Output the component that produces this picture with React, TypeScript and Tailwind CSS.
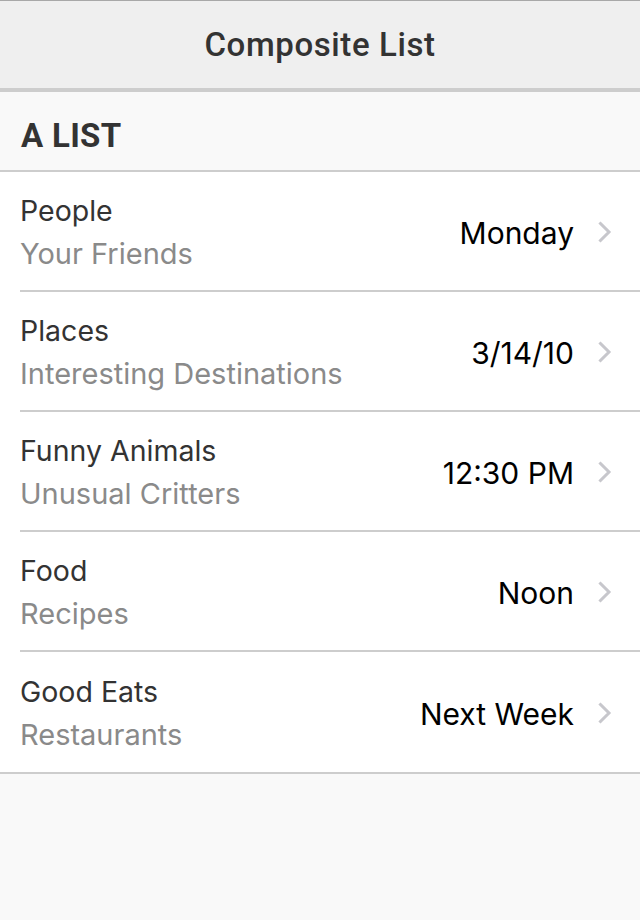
import React from "react";

const rows = [
  { title: "People", sub: "Your Friends", value: "Monday" },
  { title: "Places", sub: "Interesting Destinations", value: "3/14/10" },
  { title: "Funny Animals", sub: "Unusual Critters", value: "12:30 PM" },
  { title: "Food", sub: "Recipes", value: "Noon" },
  { title: "Good Eats", sub: "Restaurants", value: "Next Week" },
];

function Chevron() {
  return (
    <svg width="14" height="22" viewBox="0 0 14 22" className="shrink-0 mt-[2px]">
      <path d="M2.5 2.5 L11 11 L2.5 19.5" fill="none" stroke="#c7c7cc" strokeWidth="3" strokeLinecap="square" />
    </svg>
  );
}

export default function App() {
  return (
    <div
      className="w-[640px] h-[920px] bg-[#f9f9f9] flex flex-col"
      style={{ fontFamily: "Inter, Roboto, 'Liberation Sans', sans-serif" }}
    >
      <div className="border-t border-[#a8a8a8] h-[88px] bg-[#efefef] flex items-center justify-center">
        <span
          className="text-[33px] font-medium text-[#333] tracking-[0.6px]"
          style={{ fontFamily: "Roboto, sans-serif" }}
        >
          Composite List
        </span>
      </div>
      <div className="h-[4px] bg-[#cdcdcd]" />
      <div className="h-[80px] flex items-center px-[21px] pt-[10px] border-b-2 border-[#cdcdcd]">
        <span className="text-[33px] font-bold text-[#333] tracking-[0.3px]" style={{ fontFamily: "Roboto, sans-serif" }}>
          A LIST
        </span>
      </div>
      <div className="bg-white border-b-2 border-[#cdcdcd]">
        {rows.map((r, i) => (
          <div key={r.title} className="pl-[20px]">
            <div
              className={
                "h-[120px] flex items-center pr-[28px] " +
                (i < rows.length - 1 ? "border-b-2 border-[#cdcdcd]" : "")
              }
            >
              <div className="flex-1 flex flex-col pt-[2px]">
                <span className="text-[28.5px] leading-[44px] text-[#333]">{r.title}</span>
                <span className="text-[29px] leading-[42px] text-[#8a8a8a]">{r.sub}</span>
              </div>
              <span className="text-[30px] text-black mr-[24px] mt-[4px]">{r.value}</span>
              <Chevron />
            </div>
          </div>
        ))}
      </div>
    </div>
  );
}
